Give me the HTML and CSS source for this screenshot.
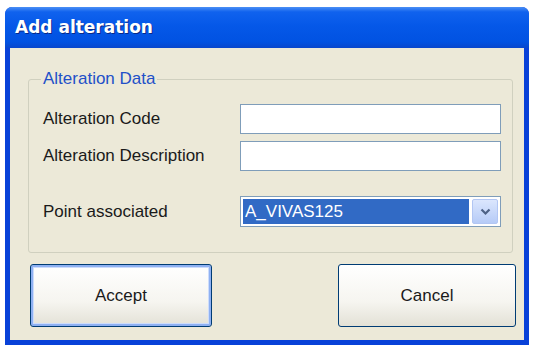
FILE: index.html
```html
<!DOCTYPE html>
<html lang="en">
<head>
  <meta charset="UTF-8">
  <title>Add alteration</title>
  <link rel="stylesheet" href="styles.css">
</head>
<body>
  <div class="window">
    <div class="titlebar">Add alteration</div>

    <div class="client">
      <fieldset class="group">
        <legend>Alteration Data</legend>

        <div class="row">
          <label for="altCode">Alteration Code</label>
          <input class="field" id="altCode" type="text">
        </div>
        <div class="row">
          <label for="altDesc">Alteration Description</label>
          <input class="field" id="altDesc" type="text">
        </div>
        <div class="row row-combo">
          <label>Point associated</label>
          <div class="combo">
            <span class="combo-value">A_VIVAS125</span>
            <span class="combo-btn">
              <svg width="11" height="8" viewBox="0 0 11 8">
                <path d="M1.5 1.5 L5.5 5.5 L9.5 1.5" fill="none" stroke="#4d6185" stroke-width="2.2"/>
              </svg>
            </span>
          </div>
        </div>
      </fieldset>

      <div class="buttons">
        <button class="btn btn-default">Accept</button>
        <button class="btn btn-cancel">Cancel</button>
      </div>
    </div>
  </div>
</body>
</html>
```

FILE: styles.css
```css
body {
  margin: 0;
  background: #fff;
  font-family: "Liberation Sans", Arial, sans-serif;
}
.window {
  margin: 7px 0 0 5px;
  width: 524px;
  background: #0841d8;
  border-radius: 7px 7px 0 0;
  padding: 0 5px 5px 5px;
  box-sizing: border-box;
  display: flex;
  flex-direction: column;
}
.titlebar {
  height: 41px;
  margin: 0 -5px;
  padding-left: 10px;
  border-radius: 7px 7px 0 0;
  background: linear-gradient(to bottom, #4b8ff5 0%, #1062ee 12%, #0558e8 45%, #0152e2 85%, #0846cc 100%);
  color: #fff;
  font-family: "DejaVu Sans", sans-serif;
  font-weight: bold;
  font-size: 17px;
  line-height: 41px;
  text-shadow: 1px 1px 0 #0a2a88;
}
.client {
  background: #ece9d8;
  padding: 22px 11px 13px 18px;
  display: flex;
  flex-direction: column;
}
.group {
  margin: 0;
  border: 1px solid #d0d0bf;
  border-radius: 3px;
  padding: 16px 11px 25px 14px;
  display: flex;
  flex-direction: column;
  gap: 7px;
}
.group legend {
  color: #2250c8;
  font-size: 17px;
  line-height: 18px;
  padding: 0 2px;
  margin-left: -2px;
}
.row {
  display: flex;
  align-items: center;
}
.row label {
  width: 197px;
  font-size: 17px;
  color: #1a1a1a;
}
.row-combo {
  margin-top: 18px;
}
.field {
  flex: 1;
  height: 30px;
  box-sizing: border-box;
  border: 1px solid #7f9db9;
  background: #fff;
  margin: 0;
}
.combo {
  flex: 1;
  height: 31px;
  box-sizing: border-box;
  border: 1px solid #7f9db9;
  background: #fff;
  padding: 2px;
  display: flex;
  gap: 3px;
}
.combo-value {
  flex: 1;
  background: #316ac5;
  color: #fff;
  font-size: 17px;
  line-height: 25px;
  padding-left: 2px;
}
.combo-btn {
  width: 26px;
  border-radius: 2px;
  background: linear-gradient(to bottom, #dbe6fd, #b6cbf7);
  border: 1px solid #b2c6f3;
  box-sizing: border-box;
  display: flex;
  align-items: center;
  justify-content: center;
}
.buttons {
  display: flex;
  justify-content: space-between;
  margin: 11px -3px 0 2px;
}
.btn {
  height: 63px;
  border: 1px solid #003c74;
  border-radius: 3px;
  background: linear-gradient(to bottom, #ffffff 0%, #f6f5f0 60%, #e3e1d6 100%);
  font-family: "Liberation Sans", Arial, sans-serif;
  font-size: 17px;
  color: #1a1a1a;
}
.btn-default {
  width: 182px;
  box-shadow: inset 0 0 0 2px #8fb1f2, inset 0 0 0 3px #cddcfb;
}
.btn-cancel {
  width: 178px;
}
```
